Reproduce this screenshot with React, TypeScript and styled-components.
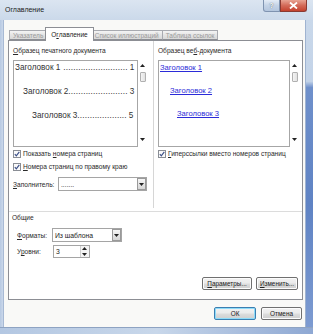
import styled, { createGlobalStyle } from "styled-components";

const GlobalStyle = createGlobalStyle`
  html, body { margin: 0; padding: 0; }
  body {
    width: 313px;
    height: 334px;
    overflow: hidden;
    background: #fff;
    font-family: "Liberation Sans", Arial, sans-serif;
    color: #2a2a2a;
  }
`;

const Check = () => (
  <svg width="8" height="8" viewBox="0 0 8 8">
    <rect x="0.5" y="0.5" width="7" height="7" fill="#fafafa" stroke="#8a8e95" />
    <path d="M1.8 4.2 L3.3 5.8 L6.3 1.8" fill="none" stroke="#3c5088" strokeWidth="1.2" />
  </svg>
);

const Arrow = ({ up }: { up?: boolean }) => (
  <svg width="5" height="3" viewBox="0 0 5 3">
    <path d={up ? "M0 3 L2.5 0 L5 3 Z" : "M0 0 L5 0 L2.5 3 Z"} fill="#222" />
  </svg>
);

const printLines = [
  { title: "Заголовок 1", page: "1", indent: 0, dots: 26, gap: 3 },
  { title: "Заголовок 2", page: "3", indent: 8, dots: 24, gap: 0 },
  { title: "Заголовок 3", page: "5", indent: 17, dots: 20, gap: 0 },
];

export default function App() {
  return (
    <>
      <GlobalStyle />
      <Window>
        <TitleBar>
          <Title>Оглавление</Title>
          <Caption>
            <HelpBtn>?</HelpBtn>
            <CloseBtn>
              <svg width="9" height="7" viewBox="0 0 9 7">
                <path d="M1 0.5 L8 6.5 M8 0.5 L1 6.5" stroke="#fff" strokeWidth="1.8" />
              </svg>
            </CloseBtn>
          </Caption>
        </TitleBar>
        <Middle>
          <LeftFrame />
          <Content>
            <TabRow>
              <Tab>Указатель</Tab>
              <Tab $active>
                О<u>г</u>лавление
              </Tab>
              <Tab>Список иллюстраций</Tab>
              <Tab>Таблица ссылок</Tab>
            </TabRow>
            <TabPage>
              <TopSection>
                <Pane $divider>
                  <Label>
                    <u>О</u>бразец печатного документа
                  </Label>
                  <PreviewRow>
                    <PreviewBox>
                      {printLines.map((l) => (
                        <PrintLine key={l.title} $indent={l.indent}>
                          <span>{l.title}</span>
                          <Dots $gap={l.gap}>{".".repeat(l.dots)}</Dots>
                          <Page>{l.page}</Page>
                        </PrintLine>
                      ))}
                    </PreviewBox>
                    <Scroll>
                      <Arrow up />
                      <Thumb />
                      <Spacer />
                      <Arrow />
                    </Scroll>
                  </PreviewRow>
                  <CheckRow $top={3}>
                    <Check />
                    <span>
                      Показать <u>н</u>омера страниц
                    </span>
                  </CheckRow>
                  <CheckRow $top={5}>
                    <Check />
                    <span>
                      <u>Н</u>омера страниц по правому краю
                    </span>
                  </CheckRow>
                  <FieldRow $top={6}>
                    <FieldLabel $width={45}>
                      <u>З</u>аполнитель:
                    </FieldLabel>
                    <Select $width={89}>
                      <SelectText>.......</SelectText>
                      <SelectButton>
                        <Arrow />
                      </SelectButton>
                    </Select>
                  </FieldRow>
                </Pane>
                <Pane>
                  <Label>
                    Образец ве<u>б</u>-документа
                  </Label>
                  <PreviewRow>
                    <PreviewBox $wide>
                      <LinkLine $indent={0}>Заголовок 1</LinkLine>
                      <LinkLine $indent={10}>Заголовок 2</LinkLine>
                      <LinkLine $indent={17}>Заголовок 3</LinkLine>
                    </PreviewBox>
                    <Scroll>
                      <Arrow up />
                      <Thumb />
                      <Spacer />
                      <Arrow />
                    </Scroll>
                  </PreviewRow>
                  <CheckRow $top={3}>
                    <Check />
                    <span>
                      <u>Г</u>иперссылки вместо номеров страниц
                    </span>
                  </CheckRow>
                </Pane>
              </TopSection>
              <General>
                <Label>Общие</Label>
                <FieldRow $top={6} $left={5}>
                  <FieldLabel $width={35}>
                    <u>Ф</u>орматы:
                  </FieldLabel>
                  <Select $width={70}>
                    <SelectText>Из шаблона</SelectText>
                    <SelectButton>
                      <Arrow />
                    </SelectButton>
                  </Select>
                </FieldRow>
                <FieldRow $top={3} $left={5}>
                  <FieldLabel $width={36}>
                    У<u>р</u>овни:
                  </FieldLabel>
                  <Spin>
                    <SelectText>3</SelectText>
                    <SpinArrows>
                      <Arrow up />
                      <Arrow />
                    </SpinArrows>
                  </Spin>
                </FieldRow>
              </General>
              <PageButtons>
                <Button $width={50}>
                  <u>П</u>араметры...
                </Button>
                <Button $width={42}>
                  <u>И</u>зменить...
                </Button>
              </PageButtons>
            </TabPage>
            <Footer>
              <Button $width={42} $default>
                ОК
              </Button>
              <Button $width={41}>Отмена</Button>
            </Footer>
          </Content>
          <RightFrame />
        </Middle>
        <BottomFrame />
      </Window>
    </>
  );
}

const Window = styled.div`
  width: 313px;
  height: 334px;
  display: flex;
  flex-direction: column;
  background: linear-gradient(90deg, #c3d4e9, #d4e0ee 40%, #c8d7ea);
`;

const TitleBar = styled.div`
  height: 20px;
  display: flex;
  align-items: flex-start;
  padding: 0 6px 0 5px;
  background: linear-gradient(180deg, #dbe5f1, #cbd9ea);
`;

const Title = styled.span`
  margin-top: 6px;
  font-size: 7px;
  color: #1c1c1c;
`;

const Caption = styled.div`
  margin-left: auto;
  display: flex;
`;

const HelpBtn = styled.div`
  width: 17px;
  height: 12px;
  border: 1px solid #7f93b0;
  border-top: none;
  border-radius: 0 0 0 3px;
  background: linear-gradient(180deg, #e4ecf6, #c4d3e6 50%, #b4c6de);
  font-size: 7px;
  color: #fff;
  font-weight: bold;
  text-shadow: 0 0 1px #234;
  display: flex;
  align-items: center;
  justify-content: center;
  box-sizing: border-box;
`;

const CloseBtn = styled.div`
  width: 27px;
  height: 12px;
  border: 1px solid #8a3a32;
  border-top: none;
  border-radius: 0 0 3px 0;
  background: linear-gradient(180deg, #e8a493, #d36a58 50%, #c4422e);
  display: flex;
  align-items: center;
  justify-content: center;
  box-sizing: border-box;
`;

const Middle = styled.div`
  flex: 1;
  display: flex;
`;

const LeftFrame = styled.div`
  width: 4px;
  background: linear-gradient(90deg, #b7c9e2, #c9d7ea 70%, #8fa4c4);
`;

const RightFrame = styled.div`
  width: 7px;
  background: linear-gradient(180deg, #c9d8ea 0, #c3d3e8 20%, #6f90cb 22%, #5f83c4 60%, #7d9bd1);
  border-left: 1px solid #9fb3d0;
`;

const BottomFrame = styled.div`
  height: 6px;
  border-top: 1px solid #8ea3c2;
  background: linear-gradient(90deg, #b3c7e2, #c8d7ea 50%, #8ea8d3);
`;

const Content = styled.div`
  width: 302px;
  display: flex;
  flex-direction: column;
  padding: 7px 2px 0 4px;
  box-sizing: border-box;
  background: #f9f9f7;
`;

const TabRow = styled.div`
  height: 13px;
  display: flex;
  align-items: flex-end;
  padding-left: 1px;
`;

const Tab = styled.div<{ $active?: boolean }>`
  position: relative;
  height: ${(p) => (p.$active ? 14 : 10)}px;
  margin: 0 ${(p) => (p.$active ? -2 : 0)}px ${(p) => (p.$active ? -1 : 0)}px;
  padding: 0 ${(p) => (p.$active ? 5 : 3)}px;
  box-sizing: border-box;
  display: flex;
  align-items: center;
  font-size: 6.5px;
  white-space: nowrap;
  color: ${(p) => (p.$active ? "#222" : "#9a9a9a")};
  border: 1px solid ${(p) => (p.$active ? "#8c8e94" : "#a8aab0")};
  border-bottom: ${(p) => (p.$active ? "none" : "1px solid #8c8e94")};
  border-left-width: ${(p) => (p.$active ? 1 : 0)}px;
  background: ${(p) =>
    p.$active ? "#fff" : "linear-gradient(180deg, #f4f4f4, #e4e4e4 50%, #d8d8d8)"};
  z-index: ${(p) => (p.$active ? 1 : 0)};
  &:first-child {
    border-left-width: 1px;
  }
`;

const TabPage = styled.div`
  height: 260px;
  border: 1px solid #8c8e94;
  background: #fff;
  box-sizing: border-box;
  display: flex;
  flex-direction: column;
`;

const TopSection = styled.div`
  height: 171px;
  display: flex;
  border-bottom: 1px solid #dcdcdc;
  box-sizing: border-box;
`;

const Pane = styled.div<{ $divider?: boolean }>`
  width: ${(p) => (p.$divider ? 145 : 148)}px;
  display: flex;
  flex-direction: column;
  padding: 6px 0 0 4px;
  box-sizing: border-box;
  margin-bottom: 3px;
  border-right: ${(p) => (p.$divider ? "1px solid #d6d6d6" : "none")};
`;

const Label = styled.div`
  font-size: 6.6px;
  line-height: 8px;
  white-space: nowrap;
`;

const PreviewRow = styled.div`
  margin-top: 5px;
  height: 87px;
  display: flex;
`;

const PreviewBox = styled.div<{ $wide?: boolean }>`
  width: ${(p) => (p.$wide ? 132 : 125)}px;
  border: 1px solid #a6a6a6;
  box-sizing: border-box;
  display: flex;
  flex-direction: column;
  padding: 2px 4px 0 1px;
  gap: ${(p) => (p.$wide ? 13 : 14)}px;
`;

const PrintLine = styled.div<{ $indent: number }>`
  display: flex;
  align-items: baseline;
  padding-left: ${(p) => p.$indent}px;
  font-size: 8.2px;
  line-height: 10px;
  color: #333;
  white-space: nowrap;
`;

const Dots = styled.span<{ $gap: number }>`
  margin-left: ${(p) => p.$gap}px;
  letter-spacing: 0.2px;
`;

const Page = styled.span`
  margin-left: auto;
  padding-left: 2px;
`;

const LinkLine = styled.div<{ $indent: number }>`
  padding-left: ${(p) => p.$indent}px;
  font-size: 7.6px;
  line-height: 10px;
  color: #2b2bd8;
  text-decoration: underline;
  white-space: nowrap;
`;

const Scroll = styled.div`
  width: 10px;
  display: flex;
  flex-direction: column;
  align-items: center;
  padding: 4px 0 6px;
  box-sizing: border-box;
`;

const Thumb = styled.div`
  margin-top: 5px;
  width: 6px;
  height: 10px;
  border: 1px solid #b0b0b0;
  border-radius: 1px;
  background: linear-gradient(90deg, #f4f4f4, #e2e2e2);
  box-sizing: border-box;
`;

const Spacer = styled.div`
  flex: 1;
`;

const CheckRow = styled.div<{ $top: number }>`
  margin-top: ${(p) => p.$top}px;
  display: flex;
  align-items: center;
  gap: 2px;
  font-size: 6.6px;
  line-height: 8px;
  white-space: nowrap;
`;

const FieldRow = styled.div<{ $top: number; $left?: number }>`
  margin-top: ${(p) => p.$top}px;
  padding-left: ${(p) => p.$left ?? 0}px;
  display: flex;
  align-items: center;
  font-size: 6.6px;
  white-space: nowrap;
`;

const FieldLabel = styled.span<{ $width: number }>`
  width: ${(p) => p.$width}px;
`;

const Select = styled.div<{ $width: number }>`
  width: ${(p) => p.$width}px;
  height: 14px;
  border: 1px solid #a5a5a5;
  box-sizing: border-box;
  display: flex;
  align-items: center;
  background: #fff;
`;

const SelectText = styled.span`
  flex: 1;
  padding-left: 2px;
  font-size: 6.8px;
  color: #222;
`;

const SelectButton = styled.div`
  width: 9px;
  height: 12px;
  border: 1px solid #9a9a9a;
  box-sizing: border-box;
  display: flex;
  align-items: center;
  justify-content: center;
  background: linear-gradient(180deg, #f6f6f6, #e6e6e6 50%, #d6d6d6);
`;

const General = styled.div`
  display: flex;
  flex-direction: column;
  padding: 2px 0 0 3px;
`;

const Spin = styled.div`
  width: 37px;
  height: 13px;
  border: 1px solid #a5a5a5;
  box-sizing: border-box;
  display: flex;
  align-items: center;
`;

const SpinArrows = styled.div`
  width: 8px;
  height: 100%;
  display: flex;
  flex-direction: column;
  align-items: center;
  justify-content: space-around;
  border-left: 1px solid #d0d0d0;
  background: #f4f4f4;
`;

const PageButtons = styled.div`
  margin-top: auto;
  margin-bottom: 9px;
  padding-right: 4px;
  display: flex;
  justify-content: flex-end;
  gap: 4px;
`;

const Footer = styled.div`
  display: flex;
  justify-content: flex-end;
  gap: 5px;
  padding: 7px 1px 0 0;
`;

const Button = styled.div<{ $width: number; $default?: boolean }>`
  width: ${(p) => p.$width}px;
  height: 13px;
  box-sizing: border-box;
  border: 1px solid ${(p) => (p.$default ? "#3c7fb1" : "#707070")};
  border-radius: 2px;
  box-shadow: ${(p) => (p.$default ? "inset 0 0 0 1px #8fdcf9" : "inset 0 0 0 1px #fcfcfc")};
  background: linear-gradient(180deg, #f2f2f2, #ebebeb 48%, #dddddd 52%, #cfcfcf);
  display: flex;
  align-items: center;
  justify-content: center;
  font-size: 6.4px;
  color: #222;
  white-space: nowrap;
`;
